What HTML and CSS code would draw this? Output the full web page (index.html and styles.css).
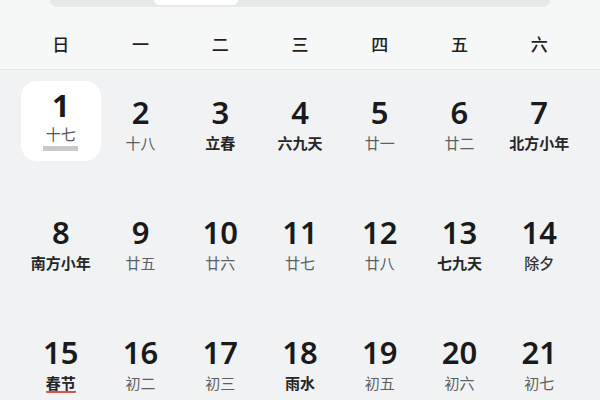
FILE: index.html
```html
<!DOCTYPE html>
<html lang="zh">
<head>
<meta charset="utf-8">
<link rel="stylesheet" href="styles.css">
</head>
<body>
<div class="header">
  <div class="seg"><div class="seg-pill"></div></div>
  <div class="weekdays">
    <span>日</span><span>一</span><span>二</span><span>三</span><span>四</span><span>五</span><span>六</span>
  </div>
</div>
<div class="grid">
  <div class="cell selected"><div class="num">1</div><div class="lunar">十七</div><div class="bar"></div></div>
  <div class="cell"><div class="num">2</div><div class="lunar">十八</div></div>
  <div class="cell"><div class="num">3</div><div class="lunar fest">立春</div></div>
  <div class="cell"><div class="num">4</div><div class="lunar fest">六九天</div></div>
  <div class="cell"><div class="num">5</div><div class="lunar">廿一</div></div>
  <div class="cell"><div class="num">6</div><div class="lunar">廿二</div></div>
  <div class="cell"><div class="num">7</div><div class="lunar fest">北方小年</div></div>

  <div class="cell"><div class="num">8</div><div class="lunar fest">南方小年</div></div>
  <div class="cell"><div class="num">9</div><div class="lunar">廿五</div></div>
  <div class="cell"><div class="num">10</div><div class="lunar">廿六</div></div>
  <div class="cell"><div class="num">11</div><div class="lunar">廿七</div></div>
  <div class="cell"><div class="num">12</div><div class="lunar">廿八</div></div>
  <div class="cell"><div class="num">13</div><div class="lunar fest">七九天</div></div>
  <div class="cell"><div class="num">14</div><div class="lunar fest2">除夕</div></div>

  <div class="cell"><div class="num">15</div><div class="lunar fest"><span class="underline">春节</span></div></div>
  <div class="cell"><div class="num">16</div><div class="lunar">初二</div></div>
  <div class="cell"><div class="num">17</div><div class="lunar">初三</div></div>
  <div class="cell"><div class="num">18</div><div class="lunar fest">雨水</div></div>
  <div class="cell"><div class="num">19</div><div class="lunar">初五</div></div>
  <div class="cell"><div class="num">20</div><div class="lunar">初六</div></div>
  <div class="cell"><div class="num">21</div><div class="lunar">初七</div></div>
</div>
</body>
</html>
```
FILE: styles.css
```css
* { box-sizing: border-box; }
html, body { margin: 0; padding: 0; overflow: hidden; }
body {
  width: 600px;
  height: 400px;
  background: #f1f2f4;
  font-family: "Noto Sans", "Noto Sans CJK SC", sans-serif;
  color: #1c1c1e;
}
.header {
  background: #f6f7f7;
  height: 70px;
  border-bottom: 1px solid #e5e6e8;
}
.seg {
  margin: 0 50px;
  height: 7px;
  background: #e7e8e8;
  border-radius: 0 0 14px 14px;
}
.seg-pill {
  margin-left: 104px;
  width: 84px;
  height: 5px;
  background: #ffffff;
  border-radius: 0 0 10px 10px;
}
.weekdays {
  display: grid;
  grid-template-columns: repeat(7, 1fr);
  padding: 0 21px;
  margin-top: 26px;
  font-family: "Noto Sans CJK SC", sans-serif;
  font-size: 17px;
  line-height: 22px;
  font-weight: 500;
  color: #1f1f1f;
  text-align: center;
}
.grid {
  display: grid;
  grid-template-columns: repeat(7, 1fr);
  grid-auto-rows: 120px;
  padding: 11px 21px 0;
  height: 330px;
  overflow: hidden;
}
.cell {
  height: 80px;
  display: flex;
  flex-direction: column;
  align-items: center;
  padding-top: 16px;
  border-radius: 16px;
}
.num {
  font-family: "Noto Sans", sans-serif;
  font-size: 31px;
  line-height: 31px;
  font-weight: 600;
  color: #1a1a1a;
}
.lunar {
  margin-top: 6px;
  font-family: "Noto Sans CJK SC", sans-serif;
  font-size: 15px;
  line-height: 18px;
  color: #5f5f5f;
  white-space: nowrap;
}
.lunar.fest {
  font-weight: 700;
  color: #262626;
}
.lunar.fest2 {
  font-weight: 500;
  color: #333;
}
.selected {
  background: #ffffff;
  padding-top: 9px;
}
.selected .num { font-weight: 700; }
.selected .lunar { margin-top: 4px; color: #555; }
.bar {
  margin-top: 3px;
  width: 35px;
  height: 5px;
  background: #c9c9c9;
}
.underline {
  display: inline-block;
  border-bottom: 2px solid #d9534f;
  border-radius: 1px;
  line-height: 17px;
}
```
